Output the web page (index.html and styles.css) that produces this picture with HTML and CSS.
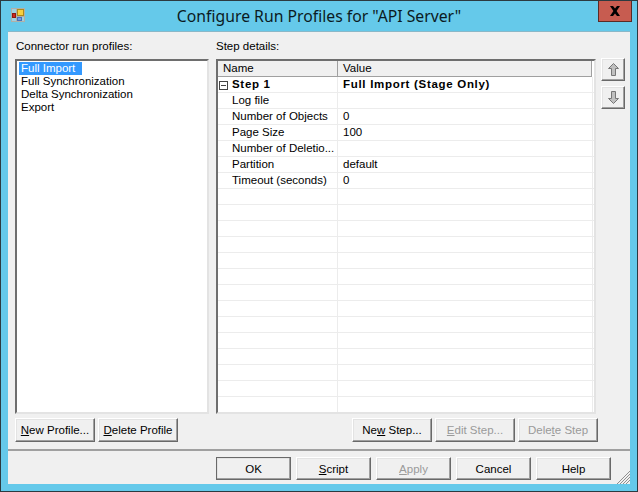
FILE: index.html
```html
<!DOCTYPE html>
<html lang="en">
<head>
<meta charset="utf-8">
<title>Configure Run Profiles</title>
<link rel="stylesheet" href="styles.css">
</head>
<body>
<div class="window">
  <header class="titlebar">
    <svg class="app-icon" width="14" height="14" viewBox="0 0 14 14">
      <rect x="0.5" y="0.5" width="13" height="13" fill="#9fd0e0" stroke="#b0b0a8"/>
      <path d="M5.5 0v14M0 8.5h14" stroke="#b0b0a8"/>
      <rect x="1.5" y="5.5" width="3" height="4" fill="#d0261e" stroke="#8a1a14"/>
      <rect x="6.5" y="1.5" width="6" height="6" fill="#f8d040" stroke="#b08a18"/>
      <rect x="6.5" y="9.5" width="4" height="3" fill="#6f9fe8" stroke="#4a70b8"/>
    </svg>
    <div class="title">Configure Run Profiles for "API Server"</div>
    <div class="close"><svg width="12" height="10" viewBox="0 0 12 10"><path d="M1 0h3l2 2.5L8 0h3L7.6 5 11 10H8L6 7.5 4 10H1l3.4-5z" fill="#000"/></svg></div>
  </header>
  <main class="client">
    <div class="panes">
      <section class="left-pane">
        <div class="label">Connector run profiles:</div>
        <div class="listbox">
          <div class="item selected">Full Import</div>
          <div class="item">Full Synchronization</div>
          <div class="item">Delta Synchronization</div>
          <div class="item">Export</div>
        </div>
        <div class="btn-row">
          <button class="btn"><u>N</u>ew Profile...</button>
          <button class="btn"><u>D</u>elete Profile</button>
        </div>
      </section>
      <section class="right-pane">
        <div class="label">Step details:</div>
        <div class="grid-area">
          <div class="grid">
            <div class="grid-head">
              <div class="head-cell name">Name</div>
              <div class="head-cell value">Value</div>
            </div>
            <div class="row strong"><div class="cell name"><span class="toggle"></span>Step 1</div><div class="cell value">Full Import (Stage Only)</div></div>
            <div class="row"><div class="cell name">Log file</div><div class="cell value"></div></div>
            <div class="row"><div class="cell name">Number of Objects</div><div class="cell value">0</div></div>
            <div class="row"><div class="cell name">Page Size</div><div class="cell value">100</div></div>
            <div class="row"><div class="cell name">Number of Deletio...</div><div class="cell value"></div></div>
            <div class="row"><div class="cell name">Partition</div><div class="cell value">default</div></div>
            <div class="row"><div class="cell name">Timeout (seconds)</div><div class="cell value">0</div></div>
            <div class="row"><div class="cell name"></div><div class="cell value"></div></div>
            <div class="row"><div class="cell name"></div><div class="cell value"></div></div>
            <div class="row"><div class="cell name"></div><div class="cell value"></div></div>
            <div class="row"><div class="cell name"></div><div class="cell value"></div></div>
            <div class="row"><div class="cell name"></div><div class="cell value"></div></div>
            <div class="row"><div class="cell name"></div><div class="cell value"></div></div>
            <div class="row"><div class="cell name"></div><div class="cell value"></div></div>
            <div class="row"><div class="cell name"></div><div class="cell value"></div></div>
            <div class="row"><div class="cell name"></div><div class="cell value"></div></div>
            <div class="row"><div class="cell name"></div><div class="cell value"></div></div>
            <div class="row"><div class="cell name"></div><div class="cell value"></div></div>
            <div class="row"><div class="cell name"></div><div class="cell value"></div></div>
            <div class="row"><div class="cell name"></div><div class="cell value"></div></div>
            <div class="row last"><div class="cell name"></div><div class="cell value"></div></div>
          </div>
          <div class="move-btns">
            <button class="btn move"><svg width="11" height="13" viewBox="0 0 11 13"><path d="M5.5.5 10.5 5.5H7.5v7h-4v-7H.5z" fill="#c0c0c0" stroke="#777"/></svg></button>
            <button class="btn move"><svg width="11" height="13" viewBox="0 0 11 13"><path d="M3.5.5h4v7h3L5.5 12.5.5 7.5h3z" fill="#c0c0c0" stroke="#777"/></svg></button>
          </div>
        </div>
        <div class="btn-row end">
          <button class="btn">Ne<u>w</u> Step...</button>
          <button class="btn disabled"><u>E</u>dit Step...</button>
          <button class="btn disabled">Dele<u>t</u>e Step</button>
        </div>
      </section>
    </div>
    <footer class="actions">
      <button class="btn wide default">OK</button>
      <button class="btn wide"><u>S</u>cript</button>
      <button class="btn wide disabled"><u>A</u>pply</button>
      <button class="btn wide">Cancel</button>
      <button class="btn wide">Help</button>
    </footer>
    <svg class="grip" width="14" height="14" viewBox="0 0 14 14"><path d="M14 1 1 14M14 4 4 14M14 7 7 14M14 10 10 14" stroke="#8f8f8f" stroke-width="1"/></svg>
  </main>
</div>
</body>
</html>
```
FILE: styles.css
```css
* { box-sizing: border-box; }
html, body { margin: 0; padding: 0; }
body {
  width: 638px;
  height: 492px;
  overflow: hidden;
  font-family: "Liberation Sans", Arial, sans-serif;
  font-size: 11.5px;
  color: #000;
}
.window {
  width: 638px;
  height: 492px;
  display: flex;
  flex-direction: column;
  background: #65c9ea;
  border: 1px solid #2c3a40;
  padding: 0 7px 7px 7px;
}
.titlebar {
  height: 30px;
  flex: none;
  display: flex;
  position: relative;
  align-items: center;
  justify-content: center;
}
.app-icon { position: absolute; left: 3px; top: 7px; }
.title {
  font-family: "Noto Sans", sans-serif;
  font-size: 15.75px;
  color: #0b1a22;
  white-space: nowrap;
}
.close {
  position: absolute;
  right: -2px;
  top: 0;
  width: 34px;
  height: 21px;
  background: #c75c50;
  border: 1px solid #5a2a26;
  border-top: none;
  display: flex;
  align-items: center;
  justify-content: center;
}
.client {
  flex: 1;
  position: relative;
  background: #f0f0f0;
  border-top: 1px solid #8ab8c8;
  display: flex;
  flex-direction: column;
  min-height: 0;
}
.panes {
  height: 419px;
  flex: none;
  display: flex;
  padding: 7px 0 0 7px;
  gap: 7px;
  border-bottom: 2px solid #a0a0a0;
}
.left-pane { width: 194px; display: flex; flex-direction: column; }
.right-pane { width: 410px; display: flex; flex-direction: column; }
.label { height: 20px; line-height: 14px; padding-left: 1px; white-space: nowrap; }
.right-pane .label { padding-left: 0; }
.listbox {
  height: 355px;
  background: #fff;
  border: 2px solid;
  border-color: #6e6e6e #e3e3e3 #e3e3e3 #6e6e6e;
  padding: 1px 2px;
}
.item { height: 13px; line-height: 13px; padding: 0 2px; width: max-content; white-space: nowrap; }
.item.selected { background: #3399ff; color: #fff; width: 63px; }
.btn-row { display: flex; gap: 3px; margin-top: 4px; }
.btn-row.end { justify-content: flex-end; padding-right: 28px; }
.btn {
  width: 80px;
  height: 24px;
  padding: 0;
  background: #f0f0f0;
  border: 1px solid;
  border-color: #fff #696969 #696969 #fff;
  box-shadow: inset -1px -1px 0 #a0a0a0, inset 1px 1px 0 #e3e3e3;
  font: inherit;
  color: #000;
  white-space: nowrap;
}
.btn.disabled { color: #9a9a9a; }
.btn.wide { width: 75px; height: 23px; }
.btn.default { outline: 1px solid #696969; outline-offset: -1px; }
.grid-area { display: flex; gap: 5px; height: 355px; }
.grid {
  width: 380px;
  height: 355px;
  background: #fff;
  border: 2px solid;
  border-color: #6e6e6e #e3e3e3 #e3e3e3 #6e6e6e;
  overflow: hidden;
}
.grid-head {
  display: flex;
  height: 16px;
  width: 374px;
  background: #f0f0f0;
  border-right: 1px solid #a0a0a0;
  border-bottom: 1px solid #a0a0a0;
}
.head-cell { line-height: 15px; padding-left: 5px; }
.head-cell.name { width: 120px; border-right: 1px solid #a0a0a0; }
.head-cell.value { padding-left: 5px; }
.row { display: flex; height: 16px; border-bottom: 1px solid #ececec; }
.cell { line-height: 15px; white-space: nowrap; overflow: hidden; }
.cell.name { width: 120px; flex: none; padding-left: 14px; border-right: 1px solid #ececec; }
.cell.value { padding-left: 5px; flex: 1; border-right: 1px solid #ececec; margin-right: 1px; }
.strong .cell { font-weight: bold; letter-spacing: 0.7px; }
.strong .cell.name { padding-left: 1px; display: flex; align-items: center; gap: 4px; }
.toggle {
  width: 9px;
  height: 9px;
  margin-top: 1px;
  border: 1px solid #444;
  position: relative;
  flex: none;
}
.toggle::after {
  content: "";
  position: absolute;
  left: 1px;
  right: 1px;
  top: 3px;
  height: 1px;
  background: #444;
}
.move-btns { display: flex; flex-direction: column; gap: 5px; margin-top: -1px; }
.btn.move { width: 24px; height: 23px; display: flex; align-items: center; justify-content: center; }
.actions {
  display: flex;
  justify-content: flex-end;
  gap: 5px;
  padding: 6px 19px 0 0;
}
.grip { position: absolute; right: 0; bottom: 0; }
```
